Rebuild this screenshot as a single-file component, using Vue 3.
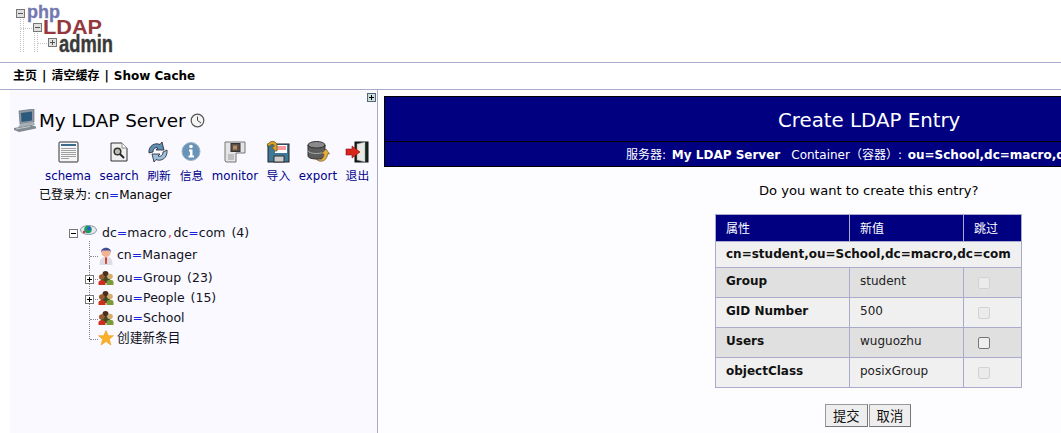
<template>
  <div class="page">
    <div class="logo">
      <svg width="130" height="62" viewBox="0 0 130 62">
        <g stroke="#c4c4c4" stroke-dasharray="1 1" fill="none">
          <path d="M20.500 19V52M23.500 19V52M21 28.500H33M37.500 33V52M34.500 33V52M38 43.500H48" />
        </g>
        <g fill="#e0e0e0" stroke="#777">
          <rect x="16.500" y="9.500" width="8" height="8" />
          <rect x="33.500" y="23.500" width="8" height="8" />
          <rect x="48.500" y="38.500" width="8" height="8" />
        </g>
        <path d="M18 13.500H23M35 27.500H40M50 42.500H55M52.500 40V45" stroke="#555" />
        <text x="27" y="18" class="lg-php" textLength="33" lengthAdjust="spacingAndGlyphs">php</text>
        <text x="43" y="34" class="lg-ldap" textLength="59" lengthAdjust="spacingAndGlyphs">LDAP</text>
        <text x="59" y="52" class="lg-admin" textLength="54" lengthAdjust="spacingAndGlyphs">admin</text>
      </svg>
    </div>
    <div class="nav">
      <a>主页</a><span class="sep">|</span><a>清空缓存</a><span class="sep">|</span><a>Show Cache</a>
    </div>
    <div class="main">
      <aside class="side">
        <div class="toggle">
          <svg width="9" height="9" viewBox="0 0 9 9"><rect x=".5" y=".5" width="8" height="8" fill="#cdd" stroke="#567" /><path d="M2 4.500H7M4.500 2V7" stroke="#000" /></svg>
        </div>
        <div class="server">
          <svg width="22" height="24" viewBox="0 0 22 24">
            <path d="M5 2L20 0V13L6 15Z" fill="#8d98a2" stroke="#5a6670" stroke-width=".6" />
            <path d="M7 4L18 2.500V11.500L7.500 13Z" fill="#2b5a7c" />
            <path d="M6 15L20 13L21 16L4 18.500Z" fill="#a9b0b6" />
            <path d="M0 19L17 16L22 17.500V19.500L5 23L0 21Z" fill="#7f8a92" />
            <path d="M2 20L16 17.500" stroke="#c4cacf" />
          </svg>
          <span class="server-name">My LDAP Server</span>
          <svg width="15" height="15" viewBox="0 0 15 15"><circle cx="7.500" cy="7.500" r="6.300" fill="#f4f4f4" stroke="#555" stroke-width="1.200" /><path d="M7.500 3.500V7.500L11 10" fill="none" stroke="#444" /></svg>
        </div>
        <div class="tools">
          <div class="tool" v-for="t in tools" :key="t.label">
            <svg width="24" height="24" viewBox="0 0 24 24" v-html="t.icon"></svg>
            <span>{{ t.label }}</span>
          </div>
        </div>
        <div class="logged">已登录为: <span>cn<u>=</u>Manager</span></div>
        <ul class="tree">
          <li class="root">
            <svg class="box" width="9" height="9" viewBox="0 0 9 9"><rect x=".5" y=".5" width="8" height="8" fill="#fff" stroke="#777" /><path d="M2 4.500H7" stroke="#000" /></svg>
            <svg class="root-ic" width="17" height="12" viewBox="0 0 17 12">
              <ellipse cx="8.500" cy="6" rx="8" ry="4.500" fill="#e6e9ee" stroke="#8a96a5" />
              <circle cx="8" cy="5.500" r="3.800" fill="#1c9a6a" />
              <circle cx="9" cy="4.500" r="1.700" fill="#2c58d0" />
              <circle cx="4" cy="8" r="1.200" fill="#d33" />
            </svg>
            <span class="txt">dc<u>=</u>macro<i>,</i>dc<u>=</u>com (4)</span>
          </li>
          <li v-for="r in rows" :key="r.id" :class="['row', { last: r.star, first: r.person }]">
            <svg v-if="r.plus" class="box" width="9" height="9" viewBox="0 0 9 9"><rect x=".5" y=".5" width="8" height="8" fill="#fff" stroke="#777" /><path d="M2 4.500H7M4.500 2V7" stroke="#000" /></svg>
            <svg v-if="r.star" class="ic" width="16" height="16" viewBox="0 0 17 17"><path d="M8.500 .5L11 6H16.500L12 9.700L13.800 16L8.500 12.300L3.200 16L5 9.700L.5 6H6Z" fill="#fbb02a" stroke="#ee9a14" stroke-width=".6" /></svg>
            <svg v-else-if="r.person" class="ic" width="16" height="19" viewBox="0 0 16 19">
              <path d="M1.500 19C1.500 12.500 4 11 8 11S14.500 12.500 14.500 19Z" fill="#dcdce4" />
              <path d="M7 11.500H9L8.800 18H7.200Z" fill="#d9302a" />
              <circle cx="8" cy="6.500" r="4.600" fill="#f2b496" />
              <path d="M3 6.500C2.500 .2 13.500 .2 13 6.500L12 4.500H4Z" fill="#3f4f96" />
            </svg>
            <svg v-else class="ic" width="16" height="14" viewBox="0 0 16 14">
              <circle cx="7.500" cy="3" r="3" fill="#4a2e1c" />
              <path d="M3 12V8C3 5 12 5 12 8V12Z" fill="#3d4a24" />
              <circle cx="3.800" cy="6" r="2.800" fill="#9a5c30" />
              <path d="M.5 14V11.500C.5 8 7.500 8 7.500 11.500V14Z" fill="#c9331e" />
              <circle cx="12" cy="5.500" r="2.800" fill="#d4ad72" />
              <path d="M8.500 14V11C8.500 8 15.500 8 15.500 11V14Z" fill="#7d9a3a" />
            </svg>
            <span class="txt" :class="{ cjk: r.star }"><template v-if="r.star">{{ r.key }}</template><template v-else>{{ r.key }}<u>=</u>{{ r.val }}</template></span>
          </li>
        </ul>
      </aside>
      <section class="content">
        <div class="head">
          <div class="title">Create LDAP Entry</div>
          <div class="sub">服务器: <b>My LDAP Server</b><em></em>Container（容器）: <b>ou=School,dc=macro,dc=com</b></div>
        </div>
        <p class="ask">Do you want to create this entry?</p>
        <table class="confirm">
          <thead>
            <tr><th>属性</th><th>新值</th><th>跳过</th></tr>
          </thead>
          <tbody>
            <tr class="dn"><td colspan="3">cn=student,ou=School,dc=macro,dc=com</td></tr>
            <tr v-for="(a, i) in attrs" :key="a.name" :class="i % 2 ? 'even' : 'odd'">
              <td class="name">{{ a.name }}</td>
              <td>{{ a.value }}</td>
              <td class="chk"><input type="checkbox" :disabled="!a.on" /></td>
            </tr>
          </tbody>
        </table>
        <div class="btns">
          <button>提交</button><button>取消</button>
        </div>
      </section>
    </div>
  </div>
</template>

<script setup>
const tools = [
  { label: "schema", icon: '<rect x="3" y="2" width="19" height="20" rx="1" fill="#f6f6f6" stroke="#333"/><path d="M5 5H20" stroke="#3c6a8c" stroke-width="2"/><path d="M5 8.500H20M5 10.500H20M5 12.500H20M5 14.500H20M5 16.500H20M5 18.500H13" stroke="#a0a0a0"/>' },
  { label: "search", icon: '<path d="M4 3H15L20 8V21H4Z" fill="#efefef" stroke="#333"/><path d="M15 3V8H20" fill="#fff" stroke="#888"/><circle cx="10.500" cy="11.500" r="3.300" fill="#bdbdae" stroke="#333" stroke-width="1.500"/><path d="M13 14L17 18" stroke="#222" stroke-width="2"/>' },
  { label: "刷新", icon: '<path d="M2 13C1 6 8 2 13 4.500L15 2L17 10L9 10L11 8C8 7 6 9 6 12Z" fill="#5f8fb0" stroke="#223" stroke-width=".8"/><path d="M20 10C21 18 14 22 9 19.500L7 22L5 14L13 14L11 16C14 17 16 15 16 12Z" fill="#9cc0d8" stroke="#223" stroke-width=".8"/>' },
  { label: "信息", icon: '<circle cx="12" cy="11.500" r="9" fill="#6a93b8" stroke="#9fb2c4"/><circle cx="12" cy="6.500" r="1.800" fill="#fff"/><path d="M10 9.500H13.500V15.500H15V17.500H9.500V15.500H11V11.500H10Z" fill="#fff"/>' },
  { label: "monitor", icon: '<path d="M2 2H22V13H13V22H3L2 21Z" fill="#e4e4e4" stroke="#777"/><rect x="8" y="3.500" width="9" height="8" fill="#5a5048" stroke="#333"/><rect x="10" y="5.500" width="4" height="4" fill="#b88a60"/><path d="M5 15H11M5 17H11M5 19H11" stroke="#9a9a9a"/>' },
  { label: "导入", icon: '<rect x="2" y="4" width="21" height="18" fill="#3f7896" stroke="#222"/><rect x="9" y="5" width="12" height="8" fill="#fff"/><path d="M10 7H20M10 9H20" stroke="#e33"/><rect x="8" y="16" width="10" height="6" fill="#ccc" stroke="#333"/><path d="M1 6C3 0 10 0 11 5V11H9L6 7.500L8.500 6C7.500 4 5 4 4 6Z" fill="#e0a020" stroke="#553" stroke-width=".7"/>' },
  { label: "export", icon: '<ellipse cx="10.500" cy="5" rx="8.500" ry="3.500" fill="#8a8a8a" stroke="#333"/><path d="M2 5V16C2 20 19 20 19 16V5C19 9 2 9 2 5Z" fill="#5c5c5c" stroke="#333"/><path d="M2 10.500C2 14.500 19 14.500 19 10.500" fill="none" stroke="#aaa"/><path d="M10 19C15 21 18 18 18 14H15.500L20 9L23.500 14H21.500C21.500 20 15 24 10 19Z" fill="#e8b030" stroke="#654" stroke-width=".7"/>' },
  { label: "退出", icon: '<rect x="10" y="2" width="13" height="20" fill="#14261c" stroke="#111"/><path d="M12 4L20 2V22L12 20Z" fill="#e8e8e2" stroke="#889" stroke-width=".5"/><path d="M1 9H7V6L15 12L7 18V15H1Z" fill="#d8261c" stroke="#811" stroke-width=".6"/>' },
];
const rows = [
  { key: "cn", val: "Manager", person: true },
  { key: "ou", val: "Group (23)", plus: true },
  { key: "ou", val: "People (15)", plus: true },
  { key: "ou", val: "School" },
  { key: "创建新条目", star: true },
].map((r, i) => ({ ...r, id: i }));
const attrs = [
  { name: "Group", value: "student" },
  { name: "GID Number", value: "500" },
  { name: "Users", value: "wuguozhu", on: true },
  { name: "objectClass", value: "posixGroup" },
];
</script>

<style>
html, body { margin: 0; background: #fff; overflow: hidden; }
</style>

<style scoped>
.page {
  width: 1061px;
  height: 433px;
  overflow: hidden;
  font-family: "DejaVu Sans", "Noto Sans CJK SC", sans-serif;
  font-size: 12px;
  color: #000;
  background: #fff;
}
.logo { height: 62px; }
.logo svg { display: block; }
.lg-php { font: bold 18px "Liberation Sans", sans-serif; fill: #7378b0; stroke: #7378b0; stroke-width: .3px; }
.lg-ldap { font: bold 21px "Liberation Sans", sans-serif; fill: #94383e; }
.lg-admin { font: bold 23px "Liberation Sans", sans-serif; fill: #3a3a3a; stroke: #3a3a3a; stroke-width: .4px; }
.nav {
  height: 26px;
  border-top: 1px solid #aaaacc;
  border-bottom: 1px solid #aaaacc;
  padding-left: 13px;
  line-height: 27px;
  font-size: 12px;
  font-weight: bold;
}
.sep { margin: 0 5px; }
.main { display: flex; margin-left: 10px; background: #fcfcff; height: 343px; }
.side {
  width: 367px;
  flex: none;
  border-right: 1px solid #aaaacc;
  background: #f9f9ff;
  position: relative;
}
.toggle { position: absolute; right: 1px; top: 3px; line-height: 0; }
.server { display: flex; align-items: center; padding: 17px 0 0 4px; height: 27px; }
.server > svg:first-child { margin-right: 3px; }
.server-name { font-size: 18.400px; margin-right: 4px; }
.tools { display: flex; gap: 8.400px; padding: 6px 0 0 35px; }
.tool { display: flex; flex-direction: column; align-items: center; color: #00008b; font-size: 11.800px; }
.tool svg { display: block; margin-bottom: 5px; }
.tool span { line-height: 15px; }
.logged { padding: 3px 0 0 29px; line-height: 16px; }
.logged u, .txt u { color: #1a22dd; text-decoration: none; }
.tree { list-style: none; margin: 20px 0 0; padding: 0 0 0 59px; }
.tree li { display: flex; align-items: center; height: 20px; position: relative; }
.box { flex: none; }
.root-ic { margin: -6px 5px 0 2px; flex: none; }
.row { padding-left: 17px; }
.tree .row.first { height: 24px; margin-bottom: 1px; }
.row .box { position: absolute; left: 16px; top: 7px; z-index: 1; }
.row::before {
  content: "";
  position: absolute;
  left: 20px;
  top: -2px;
  bottom: -1px;
  border-left: 1px dotted #888;
}
.row.last::before { bottom: 9px; }
.row::after {
  content: "";
  position: absolute;
  left: 21px;
  top: 11px;
  width: 8px;
  border-top: 1px dotted #888;
}
.row.first::after { top: 13px; }
.row .ic { flex: none; margin-left: 12px; margin-right: 3px; position: relative; z-index: 1; }
.txt { color: #112; line-height: 16px; font-size: 12.500px; word-spacing: 2px; }
.txt.cjk { font-size: 12.700px; }
.txt i { color: #e33; font-style: normal; margin: 0 1.500px; }
.content { flex: 1; min-width: 0; padding-left: 6px; background: #fdfdff; }
.head {
  margin-top: 6px;
  width: 800px;
  background: #000080;
  border: 1px solid #000;
  color: #fff;
}
.title { height: 44px; line-height: 48px; font-size: 19.800px; padding-left: 393px; border-bottom: 1px solid #000; }
.sub { height: 24px; line-height: 27px; padding-left: 241px; white-space: nowrap; }
.sub b { margin-left: 2px; }
.sub em { display: inline-block; width: 11px; }
.ask { margin: 16px 0 0; padding-left: 375px; line-height: 15px; font-size: 13.100px; }
.confirm {
  margin: 16px 0 0 331px;
  border-collapse: collapse;
  width: 307px;
  table-layout: fixed;
  font-size: 12px;
}
.confirm th, .confirm td { border: 1px solid #aaaacc; padding: 0 0 2px 10px; text-align: left; box-sizing: border-box; }
.confirm th { background: #000080; color: #fff; font-weight: normal; height: 27px; }
.confirm th:nth-child(1) { width: 134px; }
.confirm th:nth-child(2) { width: 114px; }
.dn td { background: #f0f0f0; height: 26px; font-weight: bold; white-space: nowrap; }
.confirm tr.dn td { color: #111; }
.confirm tr.odd td { background: #e0e0e0; height: 30px; padding-bottom: 4px; }
.confirm tr.even td { background: #f0f0f0; height: 30px; padding-bottom: 4px; }
.confirm td { color: #222; }
.confirm td.name { font-weight: bold; color: #111; }
.confirm tr td.chk { padding-bottom: 2px; }
.chk input {
  appearance: none;
  display: block;
  margin: 2px 0 0 4px;
  width: 12px;
  height: 12px;
  box-sizing: border-box;
  border: 1px solid #767676;
  border-radius: 2px;
  background: #eee;
}
.chk input:disabled { border-color: #d2d2d2; background: #ebebeb; }
.btns { display: flex; gap: 1px; padding: 16px 0 0 441px; }
.btns button {
  font-family: inherit;
  font-size: 13.300px;
  height: 23px;
  padding: 0 7px;
  background: #eee;
  border: 1px solid #999;
  border-bottom-color: #777;
  border-right-color: #777;
  color: #111;
}
</style>
